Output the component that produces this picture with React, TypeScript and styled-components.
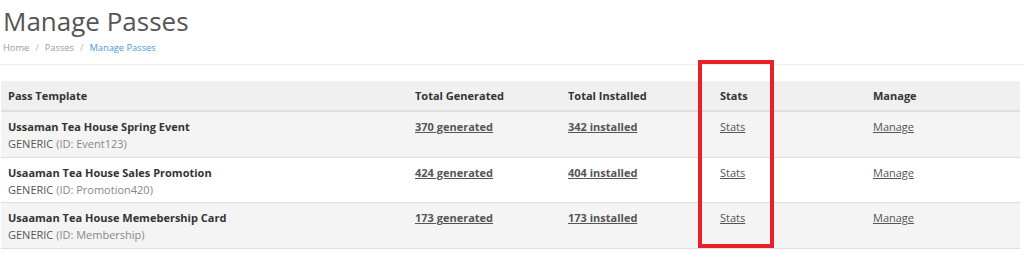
import React from "react";
import styled, { createGlobalStyle } from "styled-components";

const GlobalStyle = createGlobalStyle`
  html, body {
    margin: 0;
    padding: 0;
    background: #fff;
    font-family: "Open Sans", "Liberation Sans", sans-serif;
    color: #333;
  }
`;

const Page = styled.div`
  position: relative;
  width: 1024px;
  height: 255px;
  overflow: hidden;
`;

const Header = styled.div`
  padding: 5px 3px 0;
  height: 65px;
  border-bottom: 1px solid #f0f0f0;
  box-sizing: border-box;
`;

const Title = styled.h1`
  margin: 0;
  font-size: 26px;
  font-weight: 400;
  line-height: 32px;
  color: #555;
`;

const Crumbs = styled.div`
  display: flex;
  gap: 6px;
  margin-top: 4px;
  font-size: 9.3px;
  line-height: 14px;
  color: #999;
`;

const Crumb = styled.span<{ $active?: boolean }>`
  color: ${(p) => (p.$active ? "#4a9ad6" : "#999")};
`;

const Slash = styled.span`
  color: #bbb;
`;

const TableWrap = styled.div`
  margin: 16px 4px 0 1px;
`;

const Table = styled.table`
  width: 1019px;
  border-collapse: collapse;
  table-layout: fixed;
  font-size: 11px;
`;

const HeadCell = styled.th<{ $w?: number }>`
  width: ${(p) => (p.$w ? `${p.$w}px` : "auto")};
  background: #f0f0f0;
  text-align: left;
  font-weight: 700;
  color: #333;
  padding: 6px 7px 6px;
  line-height: 17px;
  border-bottom: 2px solid #dedede;
`;

const Row = styled.tr<{ $striped?: boolean }>`
  background: ${(p) => (p.$striped ? "#f4f4f4" : "#fff")};
  border-bottom: 1px solid #dedede;
`;

const Cell = styled.td`
  vertical-align: top;
  padding: 6px 7px 4.6px;
  line-height: 17px;
`;

const Name = styled.div`
  font-weight: 700;
  color: #333;
`;

const Sub = styled.div`
  color: #888;
  span {
    color: #555;
  }
`;

const Link = styled.a<{ $bold?: boolean }>`
  color: #555;
  font-weight: ${(p) => (p.$bold ? 700 : 400)};
  text-decoration: underline;
`;

const Highlight = styled.div`
  position: absolute;
  left: 698px;
  top: 60px;
  width: 76px;
  height: 188px;
  box-sizing: border-box;
  border: 4px solid #e8202a;
  pointer-events: none;
`;

const passes = [
  { name: "Ussaman Tea House Spring Event", id: "Event123", gen: 370, inst: 342 },
  { name: "Usaaman Tea House Sales Promotion", id: "Promotion420", gen: 424, inst: 404 },
  { name: "Usaaman Tea House Memebership Card", id: "Membership", gen: 173, inst: 173 },
];

export default function App() {
  return (
    <Page>
      <GlobalStyle />
      <Header>
        <Title>Manage Passes</Title>
        <Crumbs>
          <Crumb>Home</Crumb>
          <Slash>/</Slash>
          <Crumb>Passes</Crumb>
          <Slash>/</Slash>
          <Crumb $active>Manage Passes</Crumb>
        </Crumbs>
      </Header>
      <TableWrap>
        <Table>
          <thead>
            <tr>
              <HeadCell $w={393}>Pass Template</HeadCell>
              <HeadCell $w={139}>Total Generated</HeadCell>
              <HeadCell $w={138}>Total Installed</HeadCell>
              <HeadCell $w={139}>Stats</HeadCell>
              <HeadCell>Manage</HeadCell>
            </tr>
          </thead>
          <tbody>
            {passes.map((p, i) => (
              <Row key={p.id} $striped={i % 2 === 0}>
                <Cell>
                  <Name>{p.name}</Name>
                  <Sub>
                    <span>GENERIC</span> (ID: {p.id})
                  </Sub>
                </Cell>
                <Cell>
                  <Link $bold>{p.gen} generated</Link>
                </Cell>
                <Cell>
                  <Link $bold>{p.inst} installed</Link>
                </Cell>
                <Cell>
                  <Link>Stats</Link>
                </Cell>
                <Cell>
                  <Link>Manage</Link>
                </Cell>
              </Row>
            ))}
          </tbody>
        </Table>
      </TableWrap>
      <Highlight />
    </Page>
  );
}
